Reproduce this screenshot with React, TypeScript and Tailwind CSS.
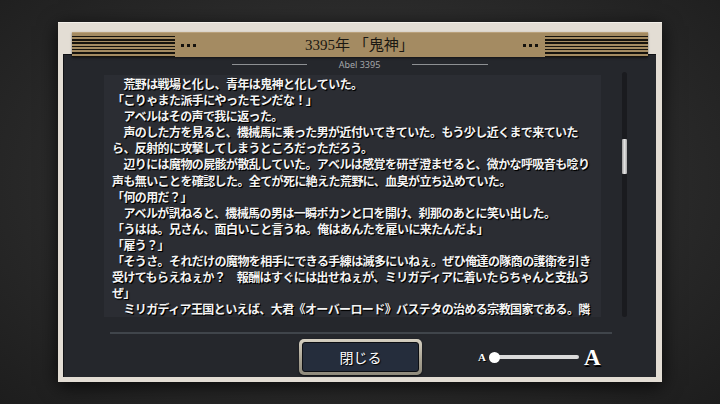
import React from 'react';

const lines = [
  '　荒野は戦場と化し、青年は鬼神と化していた。',
  '「こりゃまた派手にやったモンだな！」',
  '　アベルはその声で我に返った。',
  '　声のした方を見ると、機械馬に乗った男が近付いてきていた。もう少し近くまで来ていた',
  'ら、反射的に攻撃してしまうところだっただろう。',
  '　辺りには魔物の屍骸が散乱していた。アベルは感覚を研ぎ澄ませると、微かな呼吸音も唸り',
  '声も無いことを確認した。全てが死に絶えた荒野に、血臭が立ち込めていた。',
  '「何の用だ？」',
  '　アベルが訊ねると、機械馬の男は一瞬ポカンと口を開け、刹那のあとに笑い出した。',
  '「うはは。兄さん、面白いこと言うね。俺はあんたを雇いに来たんだよ」',
  '「雇う？」',
  '「そうさ。それだけの魔物を相手にできる手練は滅多にいねぇ。ぜひ俺達の隊商の護衛を引き',
  '受けてもらえねぇか？　報酬はすぐには出せねぇが、ミリガディアに着いたらちゃんと支払う',
  'ぜ」',
  '　ミリガディア王国といえば、大君《オーバーロード》バステタの治める宗教国家である。隣',
];

const Stripes = () => (
  <div className="w-[103px] h-[23px] bg-[repeating-linear-gradient(to_bottom,#a48b62_0px,#a48b62_1.7px,#16130e_1.7px,#16130e_3.3px)]" />
);

const Dots = () => (
  <div className="flex gap-[3px]">
    <span className="w-[3px] h-[3px] bg-[#15120d]" />
    <span className="w-[3px] h-[3px] bg-[#15120d]" />
    <span className="w-[3px] h-[3px] bg-[#15120d]" />
  </div>
);

const App = () => {
  return (
    <div className="w-[720px] h-[404px] overflow-hidden flex justify-center pt-[22px] bg-[radial-gradient(ellipse_at_50%_45%,#383838_0%,#2b2b2b_55%,#1d1d1d_100%)]">
      {/* Frame */}
      <div className="w-[604px] h-[360px] flex flex-col pt-[9px] pl-[5px] pr-[6px] pb-[5px] bg-[#e3ddd4] border-t border-[#f3efe9] shadow-[0_4px_18px_rgba(0,0,0,0.75)]">
        {/* Header bar */}
        <div className="relative z-10 ml-[9px] w-[576px] h-[25px] flex items-center bg-[#a48b62] border-t border-[#b9a07a] shadow-[0_1px_2px_rgba(0,0,0,0.5)]">
          <Stripes />
          <div className="ml-[6px]"><Dots /></div>
          <div className="flex-1 text-center text-[15px] leading-none text-[#1a1712] font-['Liberation_Serif','Noto_Sans_CJK_JP',serif]">
            3395年 「鬼神」
          </div>
          <div className="mr-[7px]"><Dots /></div>
          <Stripes />
        </div>

        {/* Panel */}
        <div className="-mt-[3px] flex-1 flex flex-col bg-[#25272c] border-t border-l border-[#111215] pt-[4px]">
          <div className="h-[11px] flex items-center justify-center gap-[32px]">
            <div className="w-[75px] h-px bg-[#8e9093]" />
            <span className="text-[9px] leading-none text-[#a4a6a9] font-['Noto_Sans',sans-serif]">Abel 3395</span>
            <div className="w-[76px] h-px bg-[#8e9093]" />
          </div>

          <div className="mt-[2px] flex pl-[40px] h-[245px]">
            <div className="mt-[3px] w-[497px] h-[242px] overflow-hidden bg-[#2b2d33] pl-[8px] pt-[1px] text-[12px] leading-[16.1px] tracking-[-0.6px] font-bold text-[#f4f4f4] font-['Noto_Sans_CJK_JP',sans-serif] [text-shadow:1px_1px_1px_#000,1px_1px_0_#000]">
              {lines.map((l, i) => (
                <div key={i} className="whitespace-nowrap">{l}</div>
              ))}
            </div>
            <div className="ml-[21px] w-[5px] h-[245px] rounded-full bg-[#1a1b1f] pt-[67px]">
              <div className="w-[5px] h-[35px] rounded-[1px] bg-[linear-gradient(to_right,#9c9c9c,#e2e2e2_50%,#a8a8a8)]" />
            </div>
          </div>

          <div className="mt-[15px] ml-[46px] w-[502px] h-[2px] bg-[#40454b]" />

          <div className="mt-[5px] flex items-center pl-[235px]">
            <button className="w-[123px] h-[36px] rounded-[5px] p-[3px] bg-[linear-gradient(to_bottom,#d6d0c2,#a7a191_60%,#8f8a7c)] shadow-[0_1px_2px_rgba(0,0,0,0.6)]">
              <div className="w-full h-full rounded-[3px] border border-[#0d0f14] bg-[#252d3c] flex items-center justify-center text-[14px] text-white font-['Noto_Sans_CJK_JP',sans-serif] [text-shadow:1px_1px_1px_#000]">
                閉じる
              </div>
            </button>

            <div className="ml-[56px] flex items-center">
              <span className="text-[11px] leading-none font-bold text-white font-['Liberation_Serif',serif] [text-shadow:1px_1px_0_#000]">A</span>
              <span className="relative z-10 ml-[3px] w-[11px] h-[11px] rounded-full bg-white" />
              <span className="-ml-[5px] w-[84px] h-[4px] rounded-full bg-[#dadada]" />
              <span className="ml-[5px] text-[23px] leading-none font-bold text-white font-['Liberation_Serif',serif] [text-shadow:1px_2px_0_#000]">A</span>
            </div>
          </div>
        </div>
      </div>
    </div>
  );
};

export default App;
